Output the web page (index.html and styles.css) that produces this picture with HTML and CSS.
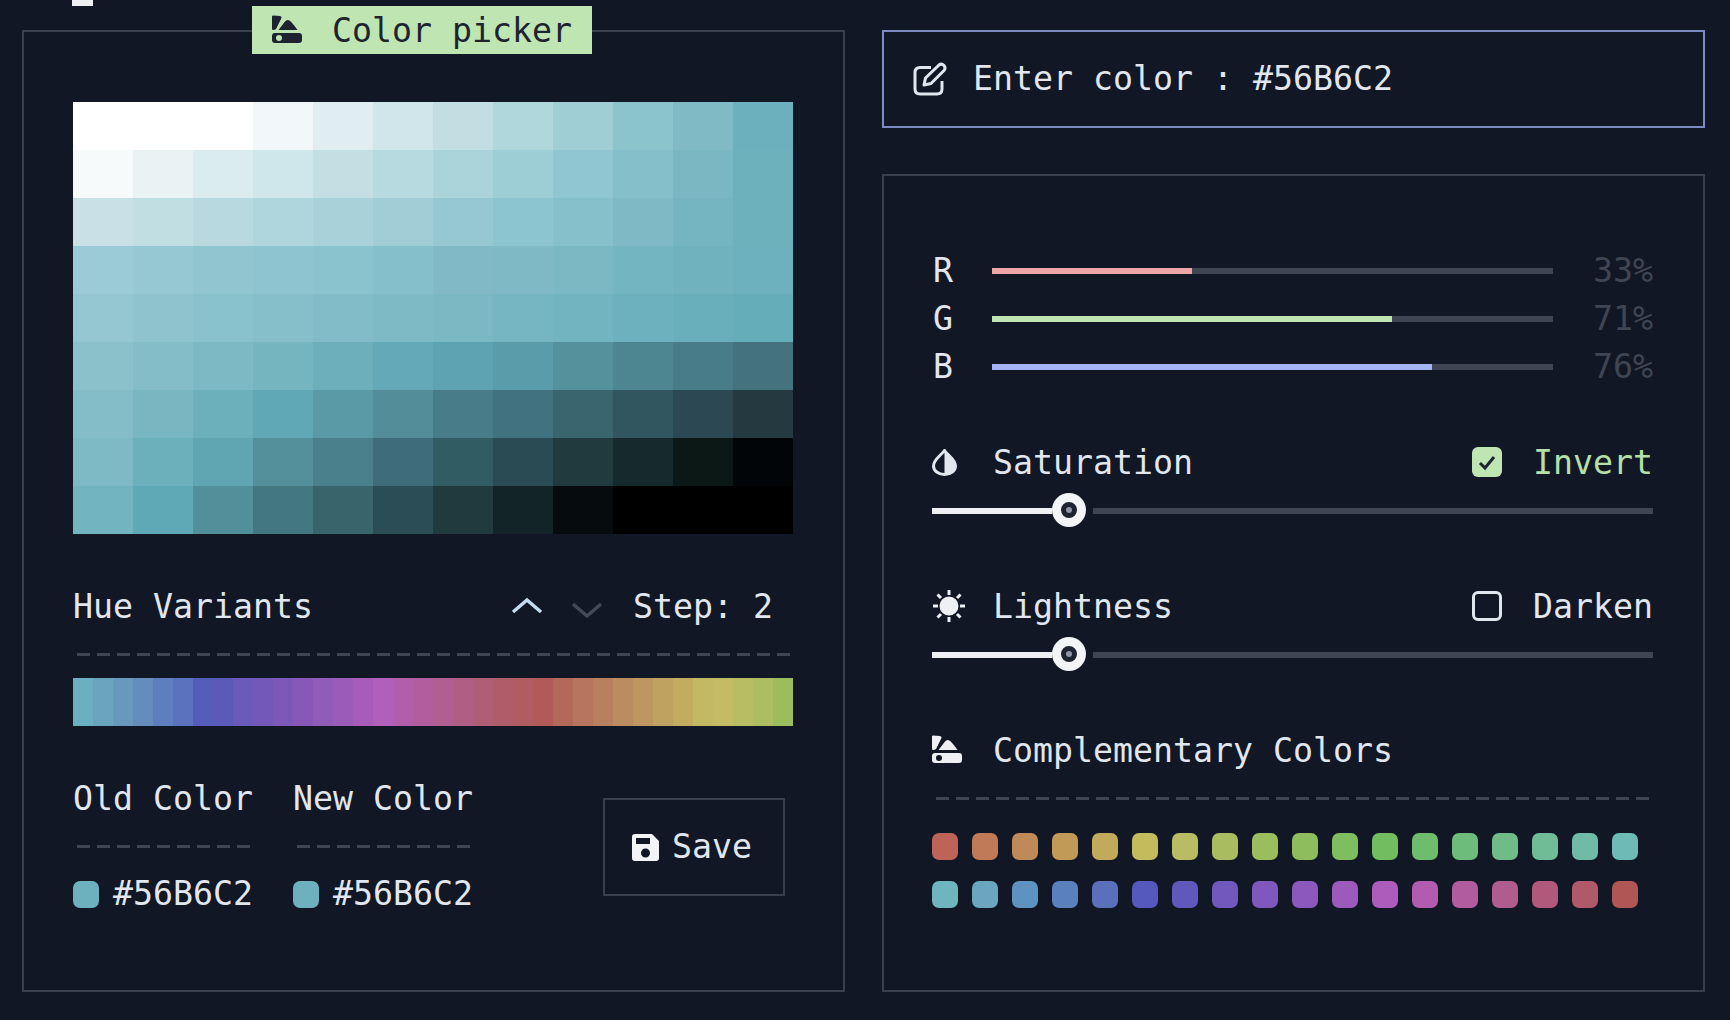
FILE: index.html
```html
<!DOCTYPE html>
<html lang="en">
<head>
    <meta charset="UTF-8">
    <meta name="viewport" content="width=device-width, initial-scale=1.0">
    <title>Color picker</title>
    <link rel="stylesheet" href="styles.css">
</head>
<body>

<div class="top-strip"><div class="cursor"></div></div>

<div class="page">
    <div class="panel left-panel">
        <div class="badge">
            <svg class="icon-swatch" viewBox="0 0 30 30"><path d="M1 0.500L8 1Q10 1.500 9.500 3L4 14Q3 15 1 15Q0 15 0 14V1.500Q0 0.500 1 0.500ZM6.500 15L13 6.500Q15 4 17.500 5.500Q20 7 25.500 15ZM3 18H27Q30 18 30 21V25Q30 28 27 28H3Q0 28 0 25V21Q0 18 3 18ZM7 20A3 3 0 1 0 7 26A3 3 0 1 0 7 20Z" fill-rule="evenodd"/></svg>
            <span>Color picker</span>
        </div>

        <div class="shade-grid" id="shadeGrid"></div>

        <div class="hue-head">
            <span>Hue Variants</span>
            <svg class="chevron chevron-up" viewBox="0 0 32 18"><path d="M2 15L16 3L30 15"/></svg>
            <svg class="chevron chevron-down" viewBox="0 0 32 18"><path d="M2 3L16 15L30 3"/></svg>
            <span class="step">Step: 2</span>
        </div>
        <div class="dashes"></div>
        <div class="hue-bar" id="hueBar"></div>

        <div class="compare">
            <div class="compare-col">
                <div class="compare-head"><span>Old Color</span></div>
                <div class="dashes"></div>
                <div class="compare-value"><i class="dot"></i><span>#56B6C2</span></div>
            </div>
            <div class="compare-col">
                <div class="compare-head"><span>New Color</span></div>
                <div class="dashes"></div>
                <div class="compare-value"><i class="dot"></i><span>#56B6C2</span></div>
            </div>
            <div class="save-btn">
                <svg class="icon-save" viewBox="0 0 27 27"><path d="M3 0H20L27 7V24Q27 27 24 27H3Q0 27 0 24V3Q0 0 3 0ZM4 4V10H18V4ZM13.500 14.500A4.500 4.500 0 1 0 13.500 23.500A4.500 4.500 0 1 0 13.500 14.500Z" fill-rule="evenodd"/></svg>
                <span>Save</span>
            </div>
        </div>
    </div>

    <div class="right-col">
        <div class="color-input">
            <svg class="icon-edit" viewBox="0 0 34 34"><path d="M18 5.500H7Q2 5.500 2 10.500V27Q2 32 7 32H24Q29 32 29 27V19"/><path d="M11 23L12.500 16L26 3Q28.500 1 31 3.500Q33 6 31 8.500L18 21.500Z"/></svg>
            <span>Enter color : #56B6C2</span>
        </div>

        <div class="panel right-panel">
            <div class="rgb-row"><span class="rgb-label">R</span><div class="rgb-track"><div class="rgb-fill fill-r"></div></div><span class="rgb-pct">33%</span></div>
            <div class="rgb-row"><span class="rgb-label">G</span><div class="rgb-track"><div class="rgb-fill fill-g"></div></div><span class="rgb-pct">71%</span></div>
            <div class="rgb-row"><span class="rgb-label">B</span><div class="rgb-track"><div class="rgb-fill fill-b"></div></div><span class="rgb-pct">76%</span></div>

            <div class="option-row first-option">
                <svg class="icon-drop" viewBox="0 0 25 27"><path d="M12.500 1.500C9 6.500 1.500 10.500 1.500 17A11 8.500 0 0 0 23.500 17C23.500 10.500 16 6.500 12.500 1.500Z" fill="none" stroke="#e2e6ee" stroke-width="3"/><path d="M12.500 1.500C16 6.500 23.500 10.500 23.500 17A11 8.500 0 0 1 12.500 25.500Z" fill="#e2e6ee"/></svg>
                <span>Saturation</span>
                <div class="checkbox checked"><svg viewBox="0 0 30 30"><path d="M8 16L13 21L22 10"/></svg></div>
                <span class="check-label label-on">Invert</span>
            </div>
            <div class="slider"><div class="slider-fill"></div><div class="thumb"></div><div class="slider-rest"></div></div>

            <div class="option-row">
                <svg class="icon-sun" viewBox="0 0 34 34"><circle cx="17" cy="17" r="8"/><path d="M17 1V6M17 28V33M1 17H6M28 17H33M5.500 5.500L9 9M25 25L28.500 28.500M5.500 28.500L9 25M25 9L28.500 5.500"/></svg>
                <span>Lightness</span>
                <div class="checkbox"></div>
                <span class="check-label">Darken</span>
            </div>
            <div class="slider"><div class="slider-fill"></div><div class="thumb"></div><div class="slider-rest"></div></div>

            <div class="option-row last-head">
                <svg class="icon-swatch icon-swatch-light" viewBox="0 0 30 30"><path d="M1 0.500L8 1Q10 1.500 9.500 3L4 14Q3 15 1 15Q0 15 0 14V1.500Q0 0.500 1 0.500ZM6.500 15L13 6.500Q15 4 17.500 5.500Q20 7 25.500 15ZM3 18H27Q30 18 30 21V25Q30 28 27 28H3Q0 28 0 25V21Q0 18 3 18ZM7 20A3 3 0 1 0 7 26A3 3 0 1 0 7 20Z" fill-rule="evenodd"/></svg>
                <span>Complementary Colors</span>
            </div>
            <div class="dashes"></div>
            <div class="comp-row" id="compWarm"></div>
            <div class="comp-row" id="compCool"></div>
        </div>
    </div>
</div>

<script src="script.js"></script>
</body>
</html>
```

FILE: styles.css
```css
body {
    margin: 0;
    height: 1020px;
    overflow: hidden;
    background: #111724;
    color: #e2e6ee;
    font-family: "DejaVu Sans Mono", monospace;
    font-size: 33.22px;
    line-height: 48px;
}

svg {
    display: block;
    flex: none;
}

span {
    padding-top: 2px;
}

.compare-value span, .save-btn span, .color-input span {
    padding-top: 0;
}

.top-strip {
    height: 30px;
    padding-left: 72px;
}

.cursor {
    width: 21px;
    height: 6px;
    background: #eef0f4;
}

.page {
    display: flex;
    gap: 37px;
    height: 962px;
    padding-left: 22px;
}

.panel {
    position: relative;
    box-sizing: border-box;
    width: 823px;
    padding: 70px 50px 0 49px;
    border: 2px solid #393f4d;
}

.badge {
    position: absolute;
    top: -26px;
    left: 228px;
    display: flex;
    align-items: center;
    gap: 30px;
    height: 48px;
    padding: 0 20px;
    background: #bfe6b2;
    color: #1d2430;
}

.icon-swatch {
    width: 30px;
    height: 30px;
    fill: #1d2430;
}

.icon-swatch-light {
    fill: #eef0f4;
}

.shade-grid {
    display: grid;
    grid-template-columns: repeat(12, 60px);
    grid-auto-rows: 48px;
}

.hue-head {
    display: flex;
    align-items: center;
    height: 48px;
    margin-top: 48px;
}

.chevron {
    width: 32px;
    height: 18px;
    fill: none;
    stroke-width: 3.5px;
}

.chevron-up {
    margin-left: auto;
    margin-right: 28px;
    stroke: #c4dcf2;
}

.chevron-down {
    stroke: #434957;
    margin-top: 8px;
}

.step {
    margin-left: 30px;
    margin-right: 20px;
}

.dashes {
    height: 48px;
    background: repeating-linear-gradient(90deg, transparent 0 4px, #3f4552 4px 17px, transparent 17px 20px) center / 100% 3px no-repeat;
}

.hue-bar {
    display: flex;
    height: 48px;
}

.hue-bar div {
    width: 20px;
}

.compare {
    display: flex;
    gap: 40px;
    margin-top: 48px;
}

.compare-col {
    width: 180px;
}

.compare-head {
    display: flex;
    align-items: center;
    height: 48px;
}

.compare-value {
    display: flex;
    align-items: center;
    gap: 14px;
}

.dot {
    width: 26px;
    height: 27px;
    border-radius: 7px;
    background: #6cb1bd;
}

.save-btn {
    box-sizing: border-box;
    display: flex;
    align-items: center;
    gap: 13px;
    width: 182px;
    height: 98px;
    margin: 24px 8px 0 auto;
    padding-left: 27px;
    border: 2px solid #393f4d;
}

.icon-save {
    width: 27px;
    height: 27px;
    fill: #f2f4f7;
}

.right-col {
    display: flex;
    flex-direction: column;
    width: 823px;
}

.color-input {
    box-sizing: border-box;
    display: flex;
    align-items: center;
    gap: 26px;
    height: 98px;
    padding-left: 29px;
    border: 2px solid #7e8ac4;
}

.icon-edit {
    width: 34px;
    height: 34px;
    fill: none;
    stroke: #e2e6ee;
    stroke-width: 3px;
    stroke-linejoin: round;
}

.right-panel {
    flex: 1;
    margin-top: 46px;
    padding: 70px 50px 0 48px;
}

.rgb-row {
    display: flex;
    align-items: center;
    height: 48px;
}

.rgb-label {
    width: 60px;
    text-indent: 1px;
}

.rgb-track {
    width: 561px;
    height: 6px;
    margin-top: 2px;
    background: #3f4552;
}

.rgb-fill {
    height: 100%;
}

.fill-r {
    width: 200px;
    background: #eda5a5;
}

.fill-g {
    width: 400px;
    background: #bfe6b2;
}

.fill-b {
    width: 440px;
    background: #a6b4f5;
}

.rgb-pct {
    margin-left: auto;
    color: #3f4552;
}

.option-row {
    display: flex;
    align-items: center;
    height: 48px;
    margin-top: 48px;
}

.icon-drop {
    width: 25px;
    height: 27px;
    margin-right: 36px;
}

.icon-sun {
    width: 34px;
    height: 34px;
    margin-right: 27px;
    fill: #eef0f4;
    stroke: #eef0f4;
    stroke-width: 3px;
}

.last-head .icon-swatch {
    margin-right: 31px;
}

.checkbox {
    box-sizing: border-box;
    width: 30px;
    height: 30px;
    margin-left: auto;
    border: 3px solid #e2e6ee;
    border-radius: 6px;
}

.checkbox.checked {
    border: 0;
    background: #bfe6b2;
}

.checkbox svg {
    fill: none;
    stroke: #1d2430;
    stroke-width: 3px;
}

.check-label {
    width: 120px;
    margin-left: 31px;
}

.label-on {
    color: #b6e0a8;
}

.slider {
    display: flex;
    align-items: center;
    height: 48px;
}

.slider-fill {
    width: 120px;
    height: 6px;
    margin-top: 2px;
    background: #eef0f4;
}

.thumb {
    box-sizing: border-box;
    width: 34px;
    height: 34px;
    padding: 9px;
    border-radius: 50%;
    background: #f2f4f7;
}

.thumb::after {
    content: "";
    display: block;
    box-sizing: border-box;
    width: 16px;
    height: 16px;
    border: 5px solid #1d2430;
    border-radius: 50%;
    background: #8d96a3;
}

.slider-rest {
    flex: 1;
    height: 6px;
    margin-top: 2px;
    margin-left: 7px;
    background: #3f4552;
}

.comp-row {
    display: flex;
    align-items: center;
    gap: 14px;
    height: 48px;
}

.comp-row div {
    width: 26px;
    height: 27px;
    border-radius: 7px;
}
```

FILE: script.js
```js
const shades = [
    ["#ffffff", "#ffffff", "#ffffff", "#f2f7fa", "#e0eef2", "#d1e6ea", "#c2dee2", "#b0d7dc", "#9fced5", "#8cc4cc", "#80bac5", "#6db0bd"],
    ["#f6fafb", "#eaf3f4", "#dbecef", "#cfe6ea", "#c3dfe3", "#b7d9e0", "#aad3da", "#9dcdd5", "#90c6d1", "#84bfca", "#79b8c3", "#6db1bd"],
    ["#c9e1e6", "#c1dee3", "#b7d9df", "#aed6dc", "#a8d1d9", "#a0cdd6", "#96c8d3", "#8cc4cf", "#85c0cb", "#7fb9c5", "#74b5c1", "#6db1bd"],
    ["#9acbd6", "#96c8d3", "#91c6d1", "#8ec4cf", "#8ac2cd", "#85bfcb", "#81bac6", "#7fb9c5", "#7ab8c4", "#73b5c1", "#70b3bf", "#6db1be"],
    ["#95c7d2", "#8fc4cf", "#89c1cc", "#86bfca", "#82bcc8", "#7ebac6", "#7ab8c3", "#76b6c2", "#72b5c1", "#6cb1bd", "#69afbb", "#66adba"],
    ["#8ac1cb", "#84bcc7", "#7cb9c4", "#74b5c0", "#6db0bc", "#63a9b8", "#5ea3b1", "#5a9ca9", "#54919d", "#4d8691", "#487c88", "#44737d"],
    ["#84bcc7", "#78b6c2", "#6cb0bc", "#60a8b6", "#5a9aa6", "#528d99", "#487c88", "#417280", "#39656f", "#325660", "#2c4852", "#243a40"],
    ["#7dbac5", "#6cb0bc", "#5fa5b2", "#53909b", "#49808c", "#3f6c7a", "#325c64", "#2a4a54", "#213a3e", "#162a2e", "#0b1816", "#010507"],
    ["#72b5c0", "#5fa8b6", "#518f9a", "#437880", "#38646c", "#2b4d56", "#213a3e", "#132428", "#060c0e", "#000000", "#000000", "#000000"]
];

const hues = [
    "#6bb0c0", "#6aa4be", "#6898bd", "#648cbd", "#5f7ebd", "#5b72bd", "#565cb9", "#5b5ab9", "#6a5ab9",
    "#7358b9", "#7d58b8", "#8858b8", "#915cb9", "#9a5cb9", "#a85cb9", "#b05fba", "#b25eac", "#b25e9e",
    "#b15e90", "#b05e84", "#b05e76", "#b05d6a", "#b05c60", "#b25a57", "#b4685a", "#b6755c", "#b8805e",
    "#bb8c60", "#bd9660", "#bfa160", "#c1ac60", "#c3b864", "#c3bc64", "#b8bd63", "#acbd62", "#9cbd5e"
];

const compWarm = [
    "#bd6357", "#c07a58", "#c08a58", "#c19a58", "#c2aa5b", "#c4bb5c", "#b8bc63", "#a9bc60", "#9bbd5e",
    "#8ebd5d", "#7fbe5f", "#72bd60", "#6dbd6c", "#6dbc7b", "#70bc89", "#70bc97", "#6fbba8", "#6dbab7"
];

const compCool = [
    "#6fb5bd", "#6aa6bd", "#5f93bf", "#5a80be", "#5a70bd", "#5559bd", "#5f59bd", "#7158bd", "#7f58bd",
    "#8c58bd", "#9c5abd", "#ad5cbb", "#b15cb0", "#b25ca0", "#b15c8e", "#b0597a", "#b05968", "#b05654"
];

function fill(id, colors) {
    const box = document.getElementById(id);
    colors.forEach(function (color) {
        const cell = document.createElement("div");
        cell.style.background = color;
        box.appendChild(cell);
    });
}

fill("shadeGrid", shades.flat());
fill("hueBar", hues);
fill("compWarm", compWarm);
fill("compCool", compCool);
```
